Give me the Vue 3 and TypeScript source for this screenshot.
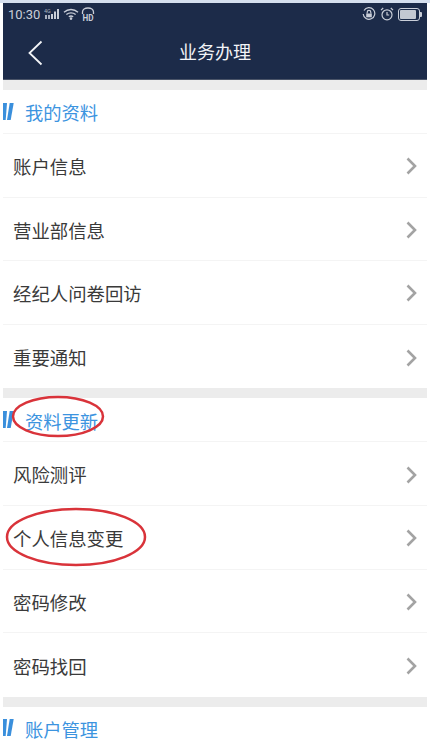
<script setup lang="ts">
interface Section { title: string; mark?: boolean; rows: { label: string; mark?: boolean }[] }
const sections: Section[] = [
  { title: '我的资料', rows: [{ label: '账户信息' }, { label: '营业部信息' }, { label: '经纪人问卷回访' }, { label: '重要通知' }] },
  { title: '资料更新', mark: true, rows: [{ label: '风险测评' }, { label: '个人信息变更', mark: true }, { label: '密码修改' }, { label: '密码找回' }] },
  { title: '账户管理', rows: [] },
]
</script>

<template>
  <div class="page">
    <div class="top-line"></div>
    <header class="nav">
      <div class="status">
        <div class="status-left">
          <span class="time">10:30</span>
          <svg class="ic-signal" width="16" height="12" viewBox="0 0 16 12">
            <text x="0" y="5" font-size="5.500" font-family="Roboto, sans-serif" fill="#aab1bf">4G</text>
            <rect x="1" y="7" width="2" height="4" fill="#aab1bf" />
            <rect x="4" y="7" width="2" height="4" fill="#aab1bf" />
            <rect x="7" y="6" width="2" height="5" fill="#c9ced8" />
            <rect x="10" y="3.500" width="2" height="7.500" fill="#c9ced8" />
            <rect x="13" y="1" width="2" height="10" fill="#c9ced8" />
          </svg>
          <svg width="16" height="12" viewBox="0 0 16 12" fill="none" stroke="#c9ced8" stroke-width="1.300">
            <path d="M1 4.200C5 .6 11 .6 15 4.200" />
            <path d="M3.400 6.600C6 4.400 10 4.400 12.600 6.600" />
            <path d="M5.800 8.800C7.200 7.800 8.800 7.800 10.200 8.800" />
            <circle cx="8" cy="10.600" r=".7" fill="#c9ced8" />
          </svg>
          <svg class="ic-hd" width="14" height="14" viewBox="0 0 14 14" fill="none" stroke="#c9ced8" stroke-width="1.300">
            <path d="M1.500 7V5C1.500 2.600 4 1 7 1s5.500 1.600 5.500 4v2" />
            <text x="1.500" y="13.500" font-size="8.500" textLength="11" lengthAdjust="spacingAndGlyphs" font-weight="700" font-family="Roboto, sans-serif" fill="#c9ced8" stroke="none">HD</text>
          </svg>
        </div>
        <div class="status-right">
          <svg width="14" height="14" viewBox="0 0 14 14" fill="none" stroke="#c9ced8" stroke-width="1.200">
            <path d="M2 3.500A5.800 5.800 0 1 1 1.200 7" />
            <rect x="4.200" y="6.500" width="5.600" height="3.800" fill="#c9ced8" stroke="none" />
            <path d="M5.200 6.500V5.200a1.800 1.800 0 0 1 3.600 0v1.300" />
          </svg>
          <svg width="14" height="14" viewBox="0 0 14 14" fill="none" stroke="#c9ced8" stroke-width="1.200">
            <circle cx="7" cy="7.800" r="5" />
            <path d="M7 5v3h2.200M1 3.200 3.200 1M13 3.200 10.800 1" />
          </svg>
          <span class="battery"><span class="battery-fill"></span></span>
        </div>
      </div>
      <div class="title-bar">
        <svg class="back" width="16" height="26" viewBox="0 0 16 26" fill="none" stroke="#f2f4f7" stroke-width="1.800">
          <path d="M14.500 1.500 2.500 13l12 11.500" />
        </svg>
        <h1 class="title">业务办理</h1>
      </div>
    </header>

    <section v-for="s in sections" :key="s.title" class="section">
      <div class="band"></div>
      <div class="section-head">
        <svg class="bars" width="13" height="17" viewBox="0 0 13 17">
          <path d="M0 0h4L2.700 17H0Z" fill="#3a8fdc" />
          <path d="M6.700 0h4L7.700 17H4Z" fill="#3a8fdc" />
        </svg>
        <span class="section-title">
          {{ s.title }}
          <svg v-if="s.mark" class="ring ring-head" width="94" height="43" viewBox="0 0 94 43" fill="none">
            <ellipse cx="47" cy="21.500" rx="45" ry="19.500" stroke="#d9333a" stroke-width="2.500" />
          </svg>
        </span>
      </div>
      <div v-for="r in s.rows" :key="r.label" class="row">
        <span class="label">
          {{ r.label }}
          <svg v-if="r.mark" class="ring ring-row" width="142" height="60" viewBox="0 0 142 60" fill="none">
            <ellipse cx="71" cy="30" rx="69" ry="28" stroke="#d9333a" stroke-width="2.500" />
          </svg>
        </span>
        <svg class="chev" width="11" height="18" viewBox="0 0 11 18" fill="none" stroke="#a3a3a3" stroke-width="2.600">
          <path d="M1.500 1.500 9 9l-7.500 7.500" />
        </svg>
      </div>
    </section>
  </div>
</template>

<style scoped>
.page {
  height: 750px;
  padding: 0 3px;
  box-sizing: border-box;
  overflow: hidden;
  background: #fff;
  font-family: "Noto Sans CJK SC", "Liberation Sans", sans-serif;
}
.top-line { height: 3px; margin: 0 -3px; background: #d5dfee; }
.nav { height: 77px; background: #1c2b49; color: #fff; display: flex; flex-direction: column; border-bottom: 1px solid #4a5468; box-sizing: border-box; }
.status { height: 22px; display: flex; justify-content: space-between; align-items: center; padding: 0 7px 0 5px; }
.status-left, .status-right { display: flex; align-items: center; gap: 3px; }
.status-right { gap: 4px; }
.time { font-family: "Roboto", sans-serif; font-size: 13px; color: #c9ced8; margin-right: 1px; }
.ic-hd { margin-left: -1px; }
.battery { width: 22px; height: 13px; border: 1px solid #c9ced8; border-radius: 3px; padding: 1px; box-sizing: border-box; display: block; position: relative; }
.battery::after { content: ""; position: absolute; right: -3px; top: 3px; width: 2px; height: 5px; background: #c9ced8; border-radius: 0 1px 1px 0; }
.battery-fill { display: block; height: 100%; background: #c3c8d1; border-radius: 1px; width: 90%; }
.title-bar { flex: 1; display: flex; align-items: center; justify-content: center; position: relative; padding-bottom: 2px; }
.back { position: absolute; left: 24px; top: 15px; }
.title { margin: 0; font-size: 18px; font-weight: 400; color: #f2f4f7; line-height: 1; }
.band { height: 10px; background: #ececec; }
.section-head { height: 44px; padding-top: 2px; display: flex; align-items: center; border-bottom: 1px solid #f4f4f4; box-sizing: border-box; }
.bars { margin-right: 9px; flex: none; margin-top: -3px; }
.section-title { font-size: 18.300px; color: #3c94df; position: relative; line-height: 1; }
.row { height: 63.600px; display: flex; align-items: center; justify-content: space-between; border-bottom: 1px solid #f4f4f4; box-sizing: border-box; padding: 2px 10px 0 10px; }
.section .row:last-child { border-bottom: none; }
.label { font-size: 18.400px; color: #3a3a3a; position: relative; line-height: 1; }
.chev { flex: none; }
.ring { position: absolute; pointer-events: none; }
.ring-head { left: -14px; top: -17px; }
.ring-row { left: -8px; top: -22px; }
</style>
